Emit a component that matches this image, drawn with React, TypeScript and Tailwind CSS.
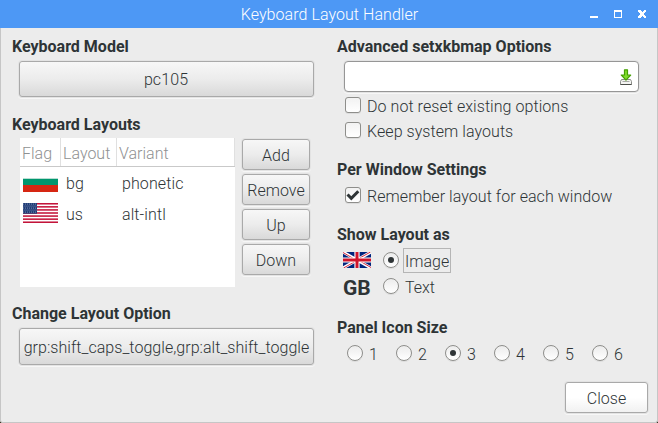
import type { ReactNode } from "react";

const buttonBase =
  "flex items-center justify-center whitespace-nowrap rounded-[3px] border border-[#a9a9a9] pt-0.5 shadow-[0_0_0_1px_#e3e3e3,0_1px_0_1px_#f7f7f7]";

function Button({ children, className = "" }: { children: ReactNode; className?: string }) {
  return (
    <button className={`${buttonBase} bg-linear-to-b from-[#f7f7f7] via-[#ececec] to-[#d9d9d9] ${className}`}>
      {children}
    </button>
  );
}

function Heading({ children, className = "" }: { children: ReactNode; className?: string }) {
  return <h2 className={`h-5 whitespace-nowrap font-bold leading-[22px] ${className}`}>{children}</h2>;
}

function Checkbox({ checked = false }: { checked?: boolean }) {
  return (
    <span className="flex h-4 w-4 shrink-0 items-center justify-center rounded-[3px] border border-[#8e8e8b] bg-linear-to-b from-[#f2f2f2] to-white shadow-[0_1px_0_#dcdcdc]">
      {checked && (
        <svg width="14" height="12" viewBox="0 0 14 12" className="shrink-0">
          <path d="M1.5 5.5 5.3 9.3 12.3 2.3" fill="none" stroke="#2e3436" strokeWidth="3" />
        </svg>
      )}
    </span>
  );
}

function CheckRow({ children, checked = false, className = "" }: { children: ReactNode; checked?: boolean; className?: string }) {
  return (
    <label className={`ml-2 flex h-5 items-center gap-1.5 ${className}`}>
      <Checkbox checked={checked} />
      <span className="pt-[3px] tracking-[0.06px]">{children}</span>
    </label>
  );
}

function Radio({ checked = false }: { checked?: boolean }) {
  return (
    <span className="flex h-4 w-4 shrink-0 items-center justify-center rounded-full border border-[#8e8e8b] bg-linear-to-b from-[#ececec] to-white shadow-[0_1px_0_#dcdcdc]">
      {checked && <span className="h-1.5 w-1.5 rounded-full bg-[#2e3436]" />}
    </span>
  );
}

function BulgarianFlag() {
  return (
    <svg width="35" height="20" viewBox="0 0 35 20" shapeRendering="crispEdges">
      <path fill="#fff" d="M0 0h35v20H0z" />
      <path fill="#b9dfd3" d="M0 6h35v1H0z" />
      <path fill="#00966e" d="M0 7h35v6H0z" />
      <path fill="#d62612" d="M0 13h35v7H0z" />
    </svg>
  );
}

function AmericanFlag() {
  const stripes = [0, 2, 4, 6, 8, 10, 12];
  const rows = [1, 3, 5, 7, 9];
  const columns = [1, 3, 5, 7, 9, 11, 13];
  return (
    <svg width="35" height="20" viewBox="0 0 35 20">
      <path fill="#fff" d="M0 0h35v20H0z" />
      {stripes.map((n) => (
        <rect key={n} y={(n * 20) / 13} width="35" height={20 / 13} fill="#c3143a" />
      ))}
      <path fill="#203c76" d="M0 0h14v10.7H0z" />
      {rows.map((y) =>
        columns.map((x) => <circle key={`${x}-${y}`} cx={x + ((y >> 1) & 1 ? 0 : -0.5)} cy={y} r="0.5" fill="#93a6c4" />),
      )}
    </svg>
  );
}

function BritishFlag() {
  return (
    <svg width="28" height="16" viewBox="0 0 28 16">
      <path fill="#00247d" d="M0 0h28v16H0z" />
      <path d="M0 0 28 16M28 0 0 16" stroke="#fff" strokeWidth="3" />
      <path d="M0 .5 13 8M28 15.5 15 8M27.5 0 14 7.5M.5 16 14 8.5" stroke="#cf142b" strokeWidth="0.9" />
      <path d="M14 0v16M0 8h28" stroke="#fff" strokeWidth="5.2" />
      <path d="M14 0v16M0 8h28" stroke="#cf142b" strokeWidth="3" />
    </svg>
  );
}

function SaveIcon() {
  return (
    <svg width="14" height="16" viewBox="0 0 14 16">
      <path d="M2.5 10.5h9l1 2v3h-11v-3z" fill="#f4f4f2" stroke="#8b8d88" />
      <path d="M1.5 15.5h11" stroke="#4b4d49" />
      <path d="M3.5 12.5h7" stroke="#a9aba6" />
      <path d="M5.5 .8h3v5.2h3.2L7 11.2 2.3 6h3.2z" fill="#7fdc2a" stroke="#46a005" strokeWidth="1.2" strokeLinejoin="round" />
    </svg>
  );
}

function TitleBar() {
  return (
    <header className="flex h-7 bg-[#4d98f5] text-white">
      <div className="w-[71px]" />
      <h1 className="flex-1 whitespace-nowrap text-center text-base font-light leading-[29px] tracking-[0.06px]">
        Keyboard Layout Handler
      </h1>
      <svg width="70" height="28" viewBox="0 0 70 28" shapeRendering="crispEdges">
        <path d="M2 16h8v2H2z" fill="#fff" />
        <path d="M26 10h8v8h-8zM27 12h6v5h-6z" fill="#fff" fillRule="evenodd" />
        <path d="M50 10h3v1h1v1h1v-1h1v-1h2v2h-1v1h-1v2h1v1h1v2h-2v-1h-1v-1h-1v1h-1v1h-3v-2h1v-1h1v-2h-1v-1h-1z" fill="#fff" />
      </svg>
    </header>
  );
}

function LayoutList() {
  return (
    <div className="h-[149px] w-[215px] bg-white">
      <div className="flex h-[29px] border-b border-[#c9c9c9] leading-[31px] text-[#8f9192]">
        <span className="w-[41px] border-r border-[#e0e0e0] pl-[2px]">Flag</span>
        <span className="w-14 border-r border-[#e0e0e0] pl-[2px]">Layout</span>
        <span className="flex-1 border-r border-[#e0e0e0] pl-[2px]">Variant</span>
      </div>
      <div className="flex h-[31px] items-center">
        <span className="ml-[3px] w-[43px] pb-px"><BulgarianFlag /></span>
        <span className="w-14 pt-0.5">bg</span>
        <span className="pt-0.5 tracking-[0.1px]">phonetic</span>
      </div>
      <div className="flex h-[30px] items-center">
        <span className="ml-[3px] w-[43px]"><AmericanFlag /></span>
        <span className="w-14 pt-[3px]">us</span>
        <span className="pt-[3px] tracking-[0.1px]">alt-intl</span>
      </div>
    </div>
  );
}

export default function App() {
  return (
    <div className="h-[423px] w-[658px] overflow-hidden bg-[#2a2614] font-['Roboto',sans-serif] text-base font-light leading-5 text-[#2e3436]">
      <div className="flex h-full flex-col overflow-hidden rounded-b-[3px] bg-[#ececec]">
        <TitleBar />
        <main className="flex flex-1 rounded-b-[3px] border border-t-0 border-[#c6c6c6] pl-[11px]">
          <section className="w-[325px] pt-2">
            <Heading>Keyboard Model</Heading>
            <Button className="ml-[7px] mt-[5px] h-9 w-[295px]"><span className="pr-px tracking-[0.1px]">pc105</span></Button>
            <Heading className="mt-[17px]">Keyboard Layouts</Heading>
            <div className="ml-2 mt-1 flex">
              <LayoutList />
              <div className="ml-[7px] mt-px flex flex-col gap-1">
                <Button className="h-[31px] w-[68px]">Add</Button>
                <Button className="h-[31px] w-[68px]">Remove</Button>
                <Button className="h-[31px] w-[68px]">Up</Button>
                <Button className="h-[31px] w-[68px]">Down</Button>
              </div>
            </div>
            <Heading className="mt-4">Change Layout Option</Heading>
            <Button className="ml-[7px] mt-[5px] h-[37px] w-[295px] tracking-[0.04px]">grp:shift_caps_toggle,grp:alt_shift_toggle</Button>
          </section>
          <section className="flex-1 pt-2">
            <Heading>Advanced setxkbmap Options</Heading>
            <div className="ml-[7px] mt-[5px] flex h-[31px] w-[295px] items-center justify-end rounded-[4px] border border-[#969696] bg-white pr-[5px] shadow-[0_0_0_1px_#e3e3e3,0_1px_0_1px_#f7f7f7]">
              <SaveIcon />
            </div>
            <CheckRow className="mt-[3px]">Do not reset existing options</CheckRow>
            <CheckRow className="mt-[5px]">Keep system layouts</CheckRow>
            <Heading className="mt-[19px]">Per Window Settings</Heading>
            <CheckRow checked className="mt-[6px]">Remember layout for each window</CheckRow>
            <Heading className="mt-[19px]">Show Layout as</Heading>
            <div className="ml-1.5 mt-1 flex h-[25px]">
              <span className="w-10 pt-1"><BritishFlag /></span>
              <span className="pt-1"><Radio checked /></span>
              <span className="ml-1 h-[25px] border border-[#b5b5b5] px-[1px] leading-[25px]">Image</span>
            </div>
            <div className="ml-1.5 mt-0.5 flex h-[25px] items-start">
              <span className="w-10 text-[21px] font-bold leading-[26px]">GB</span>
              <span className="pt-[3px]"><Radio /></span>
              <span className="ml-1.5 leading-[25px]">Text</span>
            </div>
            <Heading className="mt-[17px]">Panel Icon Size</Heading>
            <div className="ml-2.5 mt-2 flex h-4">
              {[1, 2, 3, 4, 5, 6].map((size) => (
                <label key={size} className="flex w-[49px] items-center gap-1.5">
                  <Radio checked={size === 3} />
                  <span className="pt-[3px]">{size}</span>
                </label>
              ))}
            </div>
            <button className={`${buttonBase} ml-[228px] mt-[21px] h-[31px] w-[83px] bg-linear-to-b from-white via-white to-[#f1f1f1]`}>
              Close
            </button>
          </section>
        </main>
      </div>
    </div>
  );
}
